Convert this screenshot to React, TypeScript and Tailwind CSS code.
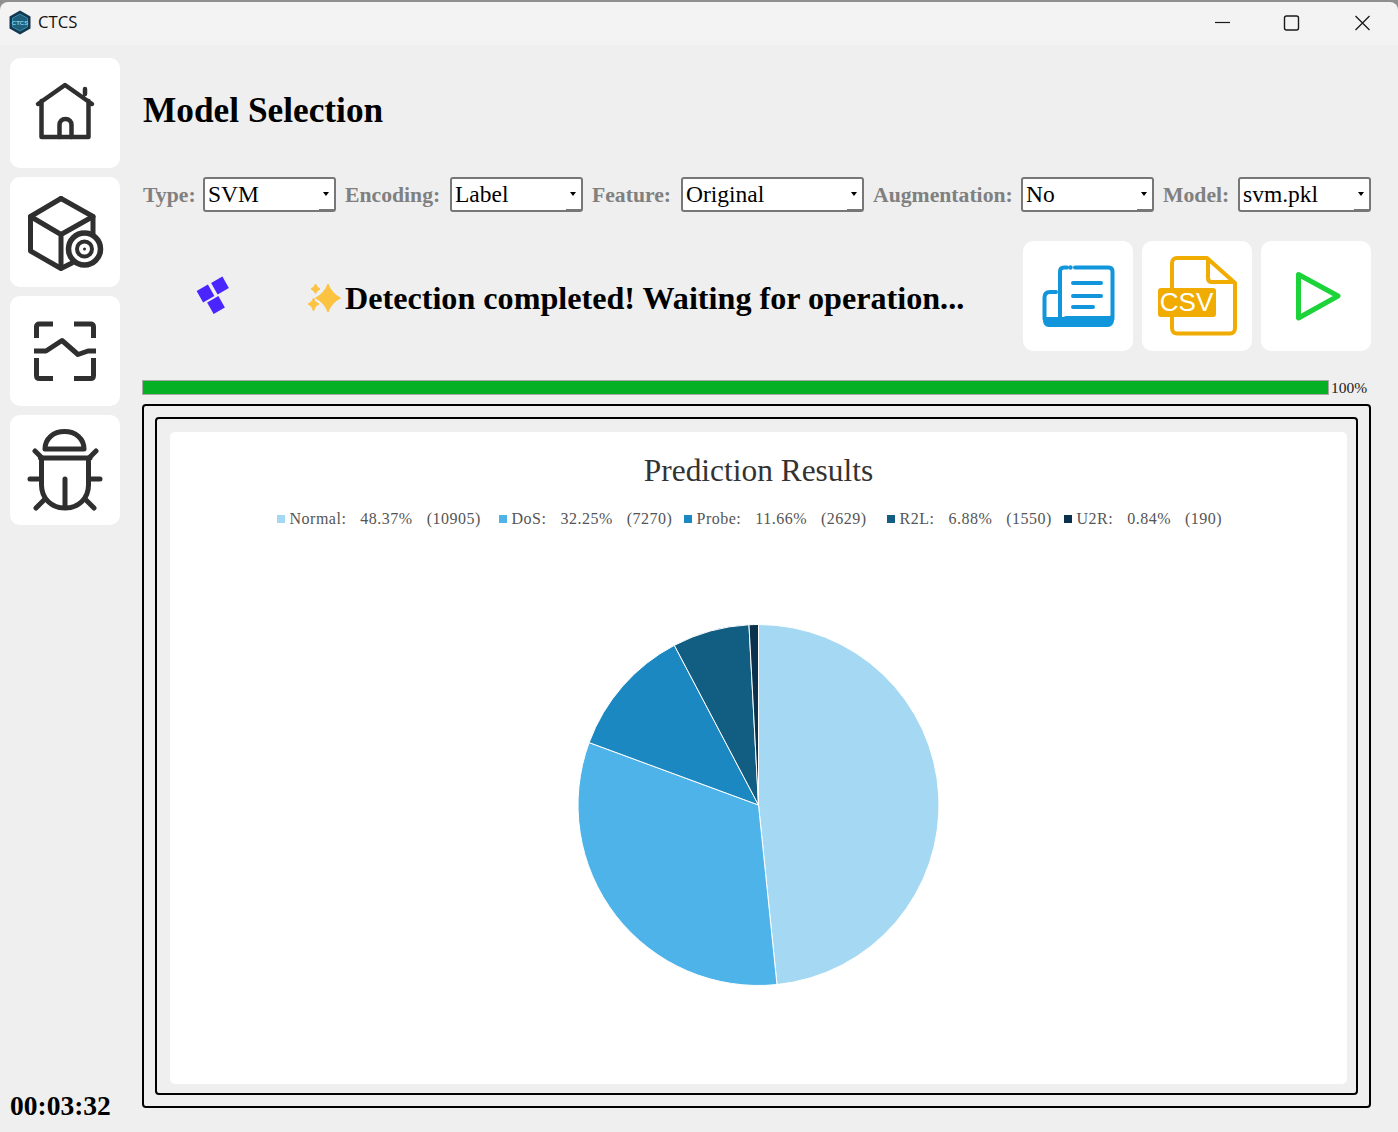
import React from "react";

const serif = "font-['Liberation_Serif',serif]";

const legend = [
  { color: "bg-[#a5d9f3]", width: "w-[196px]", text: "Normal: 48.37% (10905)" },
  { color: "bg-[#4eb3e8]", width: "w-[159px]", text: "DoS: 32.25% (7270)" },
  { color: "bg-[#1c88c1]", width: "w-[177px]", text: "Probe: 11.66% (2629)" },
  { color: "bg-[#125d82]", width: "w-[151px]", text: "R2L: 6.88% (1550)" },
  { color: "bg-[#0a324d]", width: "w-[142px]", text: "U2R: 0.84% (190)" },
];

const slices = [
  { v: 48.37, c: "#a5d9f3" },
  { v: 32.25, c: "#4eb3e8" },
  { v: 11.66, c: "#1c88c1" },
  { v: 6.88, c: "#125d82" },
  { v: 0.84, c: "#0a324d" },
];

function Pie() {
  const total = slices.reduce((s, x) => s + x.v, 0);
  let a = 0;
  const cx = 180.5;
  const cy = 181;
  const r = 180.5;
  return (
    <svg width="362" height="362" viewBox="0 0 362 362" className="mx-auto block">
      {slices.map((s, i) => {
        const start = a;
        a += (s.v / total) * Math.PI * 2;
        const x1 = cx + r * Math.sin(start);
        const y1 = cy - r * Math.cos(start);
        const x2 = cx + r * Math.sin(a);
        const y2 = cy - r * Math.cos(a);
        const large = a - start > Math.PI ? 1 : 0;
        return (
          <path
            key={i}
            d={`M${cx} ${cy}L${x1} ${y1}A${r} ${r} 0 ${large} 1 ${x2} ${y2}Z`}
            fill={s.c}
            stroke="#fff"
            strokeWidth="1"
          />
        );
      })}
    </svg>
  );
}

function Combo({ value, width }: { value: string; width: string }) {
  return (
    <div className={`relative h-[35px] ${width} shrink-0 rounded-[3px] border-2 border-[#777] bg-white pl-[3px] text-[23.5px] leading-[30px] text-black`}>
      {value}
      <span className="absolute right-[5px] top-[13px] h-0 w-0 border-x-[3.5px] border-t-[4px] border-x-transparent border-t-black" />
      <span className="absolute bottom-0 right-0 h-[1px] w-[15px] bg-[#777]" />
    </div>
  );
}

function Label({ children, width }: { children: React.ReactNode; width: string }) {
  return <span className={`${width} shrink-0 whitespace-nowrap pt-[1px] text-[21.7px] font-bold leading-[34px] text-[#808080]`}>{children}</span>;
}

function IconButton({ children }: { children: React.ReactNode }) {
  return <div className="h-[110px] w-[110px] shrink-0 rounded-[10px] bg-white">{children}</div>;
}

const S = { fill: "none", stroke: "#2f2f2f", strokeWidth: 5, strokeLinecap: "round" as const, strokeLinejoin: "round" as const };

export default function App() {
  return (
    <div className={`flex h-[1132px] w-[1398px] flex-col overflow-hidden bg-[#8f8f8f] pt-[2px] ${serif}`}>
      {/* Title bar */}
      <div className="flex h-[43px] shrink-0 items-center rounded-t-[8px] bg-[#f3f3f3] pb-[2px] pl-[9px]">
        <svg width="22" height="25" viewBox="0 0 22 25">
          <path d="M11 0.5L21.5 6.5V18.5L11 24.5L0.5 18.5V6.5Z" fill="#16384f" />
          <path d="M11 4L18.5 8.2V16.8L11 21L3.5 16.8V8.2Z" fill="#1f5f7a" stroke="#3aa0c0" strokeWidth="0.8" />
          <text x="11" y="14.5" textAnchor="middle" fontSize="6" fontWeight="700" fill="#7fd3ea" fontFamily="Liberation Sans">CTCS</text>
        </svg>
        <span className="mb-[1px] ml-[7px] font-['Open_Sans',sans-serif] text-[16.7px] text-[#111]">CTCS</span>
        <div className="ml-auto flex items-center">
          <svg width="180" height="30" viewBox="0 0 180 30" className="mr-[5px]">
            <path d="M2 14.5H17" stroke="#1a1a1a" strokeWidth="1.2" />
            <rect x="71.5" y="8" width="14" height="14" rx="2" fill="none" stroke="#1a1a1a" strokeWidth="1.4" />
            <path d="M142.5 8L156.5 22M156.5 8L142.5 22" stroke="#1a1a1a" strokeWidth="1.3" />
          </svg>
        </div>
      </div>

      {/* Body */}
      <div className="flex min-h-0 flex-1 bg-[#efefef]">
        {/* Sidebar */}
        <div className="flex w-[142px] shrink-0 flex-col gap-[9px] pl-[10px] pt-[13px]">
          <IconButton>
            <svg width="110" height="110" viewBox="0 0 110 110">
              <path d="M28 46L55 27L82 46M75 36V31M31.5 43V79H78.5V43" {...S} strokeWidth={4.5} />
              <path d="M49.5 79V67C49.5 63.5 52 61 55.5 61C59 61 61.5 63.5 61.5 67V79" {...S} strokeWidth={4.5} />
            </svg>
          </IconButton>
          <IconButton>
            <svg width="110" height="110" viewBox="0 0 110 110">
              <path d="M51 21.5L20.5 39.5V74L51 91.5L62 86" {...S} />
              <path d="M51 21.5L83 39.5V56" {...S} />
              <path d="M20.5 39.5L51 57.5L83 39.5M51 57.5V90" {...S} />
              <circle cx="74.5" cy="72" r="16" fill="#fff" stroke="#2f2f2f" strokeWidth="5.5" />
              <circle cx="74.5" cy="72" r="7.5" fill="none" stroke="#2f2f2f" strokeWidth="4" />
              <circle cx="74.5" cy="72" r="1.5" fill="#2f2f2f" />
            </svg>
          </IconButton>
          <IconButton>
            <svg width="110" height="110" viewBox="0 0 110 110">
              <path d="M43 28H29.5C27.5 28 26.5 29 26.5 31V42M64 28H80.5C82.5 28 83.5 29 83.5 31V42M26.5 62V79.5C26.5 81.5 27.5 82.5 29.5 82.5H43M83.5 62V79.5C83.5 81.5 82.5 82.5 80.5 82.5H64" {...S} strokeLinecap="butt" />
              <path d="M24 55H36L52 44.5L68 58.5L78 55H86" {...S} strokeLinecap="butt" />
            </svg>
          </IconButton>
          <IconButton>
            <svg width="110" height="110" viewBox="0 0 110 110">
              <path d="M35 34C35 23.5 43.5 16.5 54.5 16.5C65.5 16.5 74 23.5 74 34Z" {...S} />
              <path d="M30.5 43H80M31.5 43V70C31.5 84 42 93 55 93C68 93 78.5 84 78.5 70V43" {...S} />
              <path d="M55 64V92M25 36L32 43M86 36L79 43M20 64H31M79 64H90M26 93L34 85M84 93L76 85" {...S} />
            </svg>
          </IconButton>
          <div className="mt-auto pb-[10px] text-[27.5px] font-bold leading-[32px] text-black">00:03:32</div>
        </div>

        {/* Main */}
        <div className="flex w-[1229px] shrink-0 flex-col">
          <h1 className="flex h-[132px] items-center pl-px text-[35.3px] font-bold text-black">Model Selection</h1>
          <div className="flex items-center gap-[9px] pl-px">
            <Label width="w-[51px]">Type:</Label>
            <Combo value="SVM" width="w-[133px]" />
            <Label width="w-[96px]">Encoding:</Label>
            <Combo value="Label" width="w-[133px]" />
            <Label width="w-[80px]">Feature:</Label>
            <Combo value="Original" width="w-[183px]" />
            <Label width="w-[139px]">Augmentation:</Label>
            <Combo value="No" width="w-[133px]" />
            <Label width="w-[66px]">Model:</Label>
            <Combo value="svm.pkl" width="w-[133px]" />
          </div>

          <div className="mt-[29px] flex h-[110px] items-center">
            <svg width="40" height="44" viewBox="0 0 40 44" className="ml-[51px] shrink-0">
              <g fill="#4a25ff">
                <rect x="20.5" y="5" width="13" height="13" transform="rotate(-30 27 11.5)" />
                <rect x="6" y="13" width="13" height="13" transform="rotate(-30 12.5 19.5)" />
                <rect x="16.5" y="24.5" width="13" height="13" transform="rotate(-30 23 31)" />
              </g>
            </svg>
            <svg width="36" height="30" viewBox="0 0 36 30" className="ml-[73px] mt-[3px] shrink-0">
              <g fill="#fcc340" stroke="#fcc340" strokeWidth="1" strokeLinejoin="round">
                <path d="M22 1Q25.5 10.5 34.5 15Q25.5 19.5 22 29Q18.5 19.5 9.5 15Q18.5 10.5 22 1Z" />
                <path d="M9.5 1Q10.5 4.5 14 6Q10.5 7.5 9.5 10.5Q8.5 7.5 5 6Q8.5 4.5 9.5 1Z" />
                <path d="M7.5 15Q8.5 19.5 13 21Q8.5 22.5 7.5 28Q6.5 22.5 2 21Q6.5 19.5 7.5 15Z" />
              </g>
            </svg>
            <span className="ml-[3px] whitespace-nowrap pt-[5px] text-[32.15px] font-bold text-black">Detection completed! Waiting for operation...</span>
            <div className="ml-auto flex gap-[9px]">
              <IconButton>
                <svg width="110" height="110" viewBox="0 0 110 110">
                  <g fill="none" stroke="#1296db" strokeWidth="4" strokeLinecap="round">
                    <path d="M44 26.5H41C38.5 26.5 37 28 37 30.5V76" />
                    <path d="M52 26.5H85.5C88 26.5 89.5 28 89.5 30.5V78" />
                    <path d="M33 51H27C23.5 51 21.5 53 21.5 56.5V78" />
                    <path d="M50 42H78M50 55H78M50 66H70" strokeWidth="4" />
                  </g>
                  <circle cx="47.5" cy="26.5" r="2.2" fill="#1296db" />
                  <path d="M20 76H40C41 76 42 75 43 75H86C88 75 90 73 91 71V79C91 83 88 86 85 86H26C22 86 20 83 20 79Z" fill="#1296db" />
                </svg>
              </IconButton>
              <IconButton>
                <svg width="110" height="110" viewBox="0 0 110 110">
                  <path d="M30 48V22C30 19 32 17 35 17H65L93 42V87C93 90.5 91 92.5 88 92.5H35C32 92.5 30 90.5 30 87V76" fill="none" stroke="#f0ac00" strokeWidth="4" strokeLinejoin="round" />
                  <path d="M66 18V37C66 39.5 67.5 41 70 41H92" fill="none" stroke="#f0ac00" strokeWidth="4" />
                  <rect x="16" y="47" width="58" height="29" rx="3" fill="#f0ac00" />
                  <text x="44.5" y="70" textAnchor="middle" fontSize="26" fill="#fff" fontFamily="Liberation Sans">CSV</text>
                </svg>
              </IconButton>
              <IconButton>
                <svg width="110" height="110" viewBox="0 0 110 110">
                  <path d="M37.5 33.5L77 55L37.5 77Z" fill="none" stroke="#1cd33a" strokeWidth="5" strokeLinejoin="round" />
                </svg>
              </IconButton>
            </div>
          </div>

          {/* Progress */}
          <div className="mt-[29px] flex h-[15px] items-center">
            <div className="h-[15px] w-[1187px] border border-[#a8a8a8] bg-[#06b025]" />
            <span className="ml-[2px] text-[15.5px] leading-[15px] text-[#222]">100%</span>
          </div>

          {/* Frames */}
          <div className="mt-[9px] h-[704px] rounded-[4px] border-2 border-black p-[11px]">
            <div className="h-[678px] rounded-[4px] border-2 border-black py-[13px] pl-[13px] pr-[9px]">
              <div className="h-[652px] rounded-[5px] bg-white">
                <div className="pt-[20px] text-center text-[31.4px] leading-[38px] text-[#333]">Prediction Results</div>
                <div className="mt-[20px] flex justify-center gap-[13px] pr-[22px] text-[16px] leading-[18px] tracking-[0.5px] text-[#555] [word-spacing:9.5px]">
                  {legend.map((l) => (
                    <div key={l.text} className="flex items-center gap-[5px] whitespace-nowrap">
                      <span className={`h-[8px] w-[8px] ${l.color}`} />
                      <span className={l.width}>{l.text}</span>
                    </div>
                  ))}
                </div>
                <div className="pt-[96px]">
                  <Pie />
                </div>
              </div>
            </div>
          </div>
        </div>
      </div>
    </div>
  );
}
